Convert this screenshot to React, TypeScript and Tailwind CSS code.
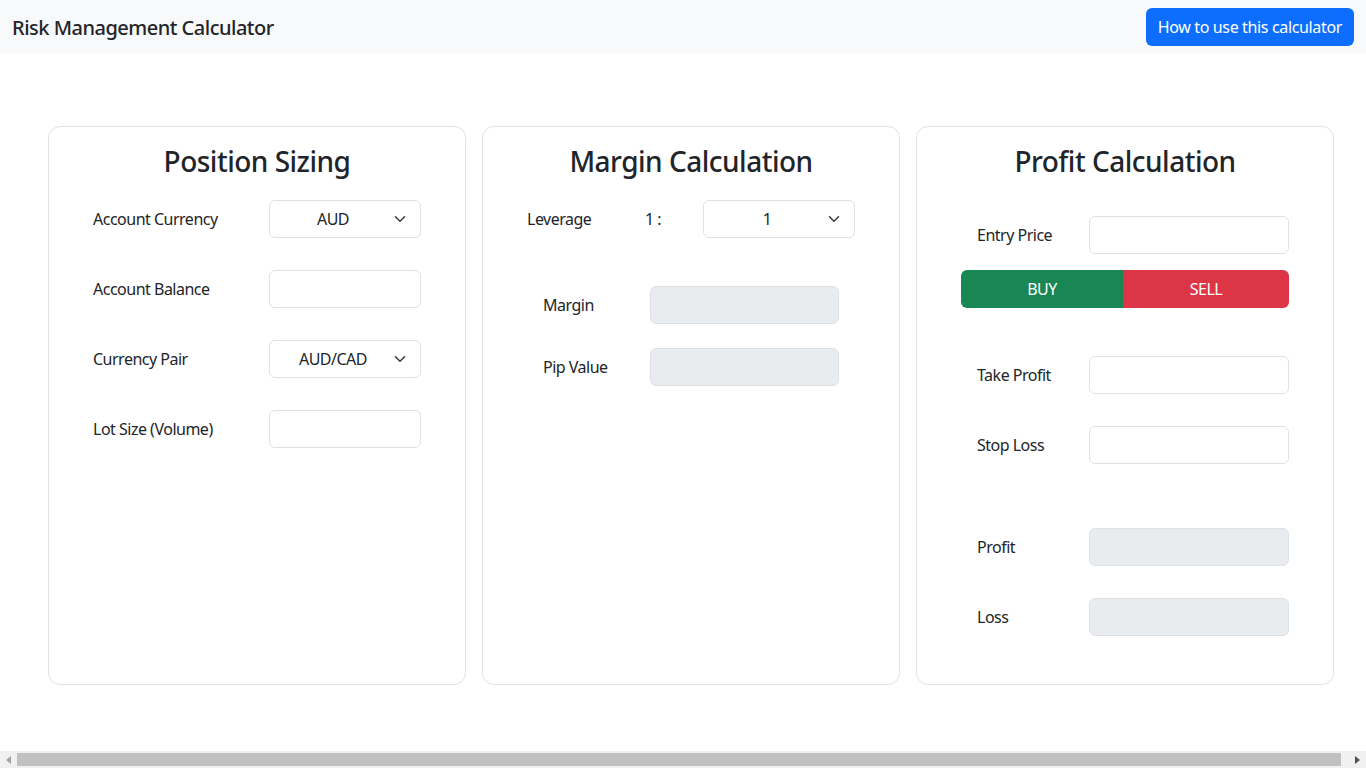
import React from "react";

const font = { fontFamily: '"Noto Sans", "Open Sans", Arial, sans-serif' };

function Chevron() {
  return (
    <svg width="16" height="12" viewBox="0 0 16 16" className="absolute right-[12px] top-1/2 -translate-y-1/2" fill="none">
      <path d="m2 5 6 6 6-6" stroke="#343a40" strokeWidth="2" strokeLinecap="round" strokeLinejoin="round" />
    </svg>
  );
}

function Select({ value }: { value: string }) {
  return (
    <div className="relative w-[152px] h-[38px] border border-[#dee2e6] rounded-[6px] bg-white flex items-center pl-3 pr-9">
      <span className="flex-1 text-center text-[16px] text-[#212529]">{value}</span>
      <Chevron />
    </div>
  );
}

function Input({ w, disabled }: { w: string; disabled?: boolean }) {
  return (
    <div
      className={`${w} h-[38px] border border-[#dee2e6] rounded-[6px] ${disabled ? "bg-[#e9ecef]" : "bg-white"}`}
    />
  );
}

function Card({ title, children }: { title: string; children: React.ReactNode }) {
  return (
    <div className="w-[418px] h-[559px] border border-[#dee2e6] rounded-[12px] bg-white flex flex-col pt-[18px]">
      <h3 className="text-center text-[28px] font-medium leading-[1.2] text-[#212529] mb-[-1px]">{title}</h3>
      {children}
    </div>
  );
}

export default function App() {
  return (
    <div style={font} className="w-full h-[768px] flex flex-col overflow-hidden bg-white text-[#212529] tracking-[-0.5px]">
      <header className="h-[53px] shrink-0 bg-[#f8f9fa] flex items-center justify-between px-3">
        <span className="text-[20px] font-medium pt-[2px]">Risk Management Calculator</span>
        <button className="h-[38px] px-3 rounded-[6px] bg-[#0d6efd] text-white text-[16px] tracking-[-0.35px]">How to use this calculator</button>
      </header>

      <main className="flex-1 flex gap-4 pl-[48px] pt-[73px]">
        <Card title="Position Sizing">
          <div className="flex flex-col gap-[32px] mt-[22px] pl-[44px]">
            <div className="flex items-center">
              <span className="w-[176px] text-[16px]">Account Currency</span>
              <Select value="AUD" />
            </div>
            <div className="flex items-center">
              <span className="w-[176px] text-[16px]">Account Balance</span>
              <Input w="w-[152px]" />
            </div>
            <div className="flex items-center">
              <span className="w-[176px] text-[16px]">Currency Pair</span>
              <Select value="AUD/CAD" />
            </div>
            <div className="flex items-center">
              <span className="w-[176px] text-[16px]">Lot Size (Volume)</span>
              <Input w="w-[152px]" />
            </div>
          </div>
        </Card>

        <Card title="Margin Calculation">
          <div className="flex items-center mt-[22px] pl-[44px]">
            <span className="w-[118px] text-[16px]">Leverage</span>
            <span className="w-[58px] text-[16px]">1 :</span>
            <Select value="1" />
          </div>
          <div className="flex flex-col gap-[24px] mt-[48px] pl-[60px]">
            <div className="flex items-center">
              <span className="w-[107px] text-[16px]">Margin</span>
              <Input w="w-[189px]" disabled />
            </div>
            <div className="flex items-center">
              <span className="w-[107px] text-[16px]">Pip Value</span>
              <Input w="w-[189px]" disabled />
            </div>
          </div>
        </Card>

        <Card title="Profit Calculation">
          <div className="flex flex-col mt-[38px] pl-[44px]">
            <div className="flex items-center pl-[16px]">
              <span className="w-[112px] text-[16px]">Entry Price</span>
              <Input w="w-[200px]" />
            </div>
            <div className="flex mt-[16px] w-[328px] h-[38px] rounded-[6px] overflow-hidden text-white text-[16px]">
              <button className="w-[162px] bg-[#198754]">BUY</button>
              <button className="flex-1 bg-[#dc3545]">SELL</button>
            </div>
            <div className="flex flex-col gap-[32px] mt-[48px] pl-[16px]">
              <div className="flex items-center">
                <span className="w-[112px] text-[16px]">Take Profit</span>
                <Input w="w-[200px]" />
              </div>
              <div className="flex items-center">
                <span className="w-[112px] text-[16px]">Stop Loss</span>
                <Input w="w-[200px]" />
              </div>
            </div>
            <div className="flex flex-col gap-[32px] mt-[64px] pl-[16px]">
              <div className="flex items-center">
                <span className="w-[112px] text-[16px]">Profit</span>
                <Input w="w-[200px]" disabled />
              </div>
              <div className="flex items-center">
                <span className="w-[112px] text-[16px]">Loss</span>
                <Input w="w-[200px]" disabled />
              </div>
            </div>
          </div>
        </Card>
      </main>

      <div className="h-[17px] shrink-0 bg-[#f1f1f1] flex items-center">
        <div className="w-[17px] h-full flex items-center justify-center">
          <svg width="5" height="8" viewBox="0 0 5 8"><path d="M5 0 L0 4 L5 8 Z" fill="#a3a3a3" /></svg>
        </div>
        <div className="w-[1324px] h-[13px] bg-[#c1c1c1]" />
        <div className="flex-1" />
        <div className="w-[17px] h-full flex items-center justify-center">
          <svg width="5" height="8" viewBox="0 0 5 8"><path d="M0 0 L5 4 L0 8 Z" fill="#505050" /></svg>
        </div>
      </div>
    </div>
  );
}
